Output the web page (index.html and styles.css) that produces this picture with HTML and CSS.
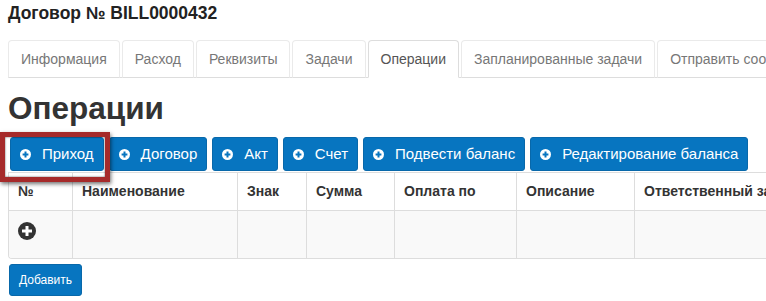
FILE: index.html
```html
<!DOCTYPE html>
<html lang="ru">
<head>
<meta charset="utf-8">
<title>Операции</title>
<link rel="stylesheet" href="styles.css">
</head>
<body>
<div class="page">
  <div class="title">Договор № BILL0000432</div>
  <ul class="tabs">
    <li><a>Информация</a></li>
    <li><a>Расход</a></li>
    <li><a>Реквизиты</a></li>
    <li><a>Задачи</a></li>
    <li class="active"><a>Операции</a></li>
    <li><a>Запланированные задачи</a></li>
    <li><a>Отправить сообщение</a></li>
  </ul>
  <h1 class="heading">Операции</h1>
  <div class="actions">
    <button class="btn"><svg class="ico" viewBox="0 0 11 11"><circle cx="5.5" cy="5.5" r="5.5" fill="#fff"/><path d="M5.5 2.6v5.8M2.6 5.5h5.8" stroke="#0775c0" stroke-width="2"/></svg>Приход</button>
    <button class="btn"><svg class="ico" viewBox="0 0 11 11"><circle cx="5.5" cy="5.5" r="5.5" fill="#fff"/><path d="M5.5 2.6v5.8M2.6 5.5h5.8" stroke="#0775c0" stroke-width="2"/></svg>Договор</button>
    <button class="btn"><svg class="ico" viewBox="0 0 11 11"><circle cx="5.5" cy="5.5" r="5.5" fill="#fff"/><path d="M5.5 2.6v5.8M2.6 5.5h5.8" stroke="#0775c0" stroke-width="2"/></svg>Акт</button>
    <button class="btn"><svg class="ico" viewBox="0 0 11 11"><circle cx="5.5" cy="5.5" r="5.5" fill="#fff"/><path d="M5.5 2.6v5.8M2.6 5.5h5.8" stroke="#0775c0" stroke-width="2"/></svg>Счет</button>
    <button class="btn"><svg class="ico" viewBox="0 0 11 11"><circle cx="5.5" cy="5.5" r="5.5" fill="#fff"/><path d="M5.5 2.6v5.8M2.6 5.5h5.8" stroke="#0775c0" stroke-width="2"/></svg>Подвести баланс</button>
    <button class="btn"><svg class="ico" viewBox="0 0 11 11"><circle cx="5.5" cy="5.5" r="5.5" fill="#fff"/><path d="M5.5 2.6v5.8M2.6 5.5h5.8" stroke="#0775c0" stroke-width="2"/></svg>Редактирование баланса</button>
  </div>
  <div class="table-wrap">
    <table class="grid">
      <colgroup>
        <col class="c1"><col class="c2"><col class="c3"><col class="c4"><col class="c5"><col class="c6"><col class="c7">
      </colgroup>
      <thead>
        <tr><th>№</th><th>Наименование</th><th>Знак</th><th>Сумма</th><th>Оплата по</th><th>Описание</th><th>Ответственный за операцию</th></tr>
      </thead>
      <tbody>
        <tr><td><svg class="add-ico" viewBox="0 0 18 18"><circle cx="9" cy="9" r="9" fill="#333"/><path d="M9 4v10M4 9h10" stroke="#fff" stroke-width="3"/></svg></td><td></td><td></td><td></td><td></td><td></td><td></td></tr>
      </tbody>
    </table>
  </div>
  <button class="btn-sm">Добавить</button>
  <div class="highlight"></div>
</div>
</body>
</html>
```
FILE: styles.css
```css
html, body {
  margin: 0;
  padding: 0;
  background: #fff;
  overflow: hidden;
}
body {
  font-family: "Liberation Sans", Arial, sans-serif;
  color: #333;
  width: 766px;
  height: 301px;
}
.page {
  position: relative;
  padding: 3px 8px 0 8px;
  overflow: hidden;
  height: 298px;
}
.title {
  font-size: 17.5px;
  font-weight: bold;
  line-height: 20px;
  color: #222;
  white-space: nowrap;
}
.tabs {
  list-style: none;
  margin: 17px 0 0 0;
  padding: 0;
  display: flex;
  border-bottom: 1px solid #ddd;
  white-space: nowrap;
  width: 1200px;
}
.tabs li {
  margin: 0 2px -1px 0;
}
.tabs a {
  display: block;
  font-size: 14px;
  line-height: 20px;
  padding: 8px 12px;
  color: #777;
  border: 1px solid #eaeaea;
  border-bottom: 1px solid #ddd;
  border-radius: 4px 4px 0 0;
}
.tabs li.active a {
  color: #555;
  border-color: #ddd;
  border-bottom-color: #fff;
  background: #fff;
}
.heading {
  font-size: 31.5px;
  line-height: 33px;
  font-weight: bold;
  margin: 14px 0 0 0;
  color: #333;
}
.actions {
  display: flex;
  gap: 5px;
  margin: 12px 0 0 2px;
  white-space: nowrap;
}
.btn {
  display: flex;
  align-items: center;
  font-family: "Liberation Sans", Arial, sans-serif;
  font-size: 15px;
  line-height: 20px;
  padding: 6px 9px;
  color: #fff;
  background: #0775c0;
  border: 1px solid #0868aa;
  border-radius: 3px;
  margin: 0;
}
.ico {
  width: 11px;
  height: 11px;
  margin-right: 11px;
  flex: none;
}
.table-wrap {
  margin-top: 1px;
  width: 900px;
  border: 1px solid #ddd;
  border-right: 0;
  border-radius: 0 0 0 4px;
  overflow: hidden;
}
.grid {
  border-collapse: separate;
  border-spacing: 0;
  table-layout: fixed;
  width: 880px;
}
.c1 { width: 63px; }
.c2 { width: 165px; }
.c3 { width: 69px; }
.c4 { width: 88px; }
.c5 { width: 122px; }
.c6 { width: 118px; }
.c7 { width: 255px; }
.grid th {
  text-align: left;
  font-size: 14px;
  font-weight: bold;
  line-height: 20px;
  padding: 8px 9px 9px 9px;
  color: #333;
  white-space: nowrap;
  overflow: hidden;
  background: #fff;
}
.grid th + th,
.grid td + td {
  border-left: 1px solid #ddd;
}
.grid td {
  border-top: 1px solid #ddd;
  background: #f9f9f9;
  padding: 11px 9px 0 9px;
  height: 36px;
  vertical-align: top;
}
.add-ico {
  display: block;
  width: 18px;
  height: 18px;
}
.btn-sm {
  display: block;
  margin: 5px 0 0 1px;
  font-family: "Liberation Sans", Arial, sans-serif;
  font-size: 12px;
  line-height: 18px;
  padding: 6px 9px;
  color: #fff;
  background: #0775c0;
  border: 1px solid #0868aa;
  border-radius: 3px;
}
.highlight {
  position: absolute;
  left: 0;
  top: 132px;
  width: 110px;
  height: 50px;
  box-sizing: border-box;
  border: 5px solid #a62a2a;
  box-shadow: 1px 2px 4px rgba(0, 0, 0, 0.55), inset 0 0 2px rgba(0, 0, 0, 0.7);
}
```
